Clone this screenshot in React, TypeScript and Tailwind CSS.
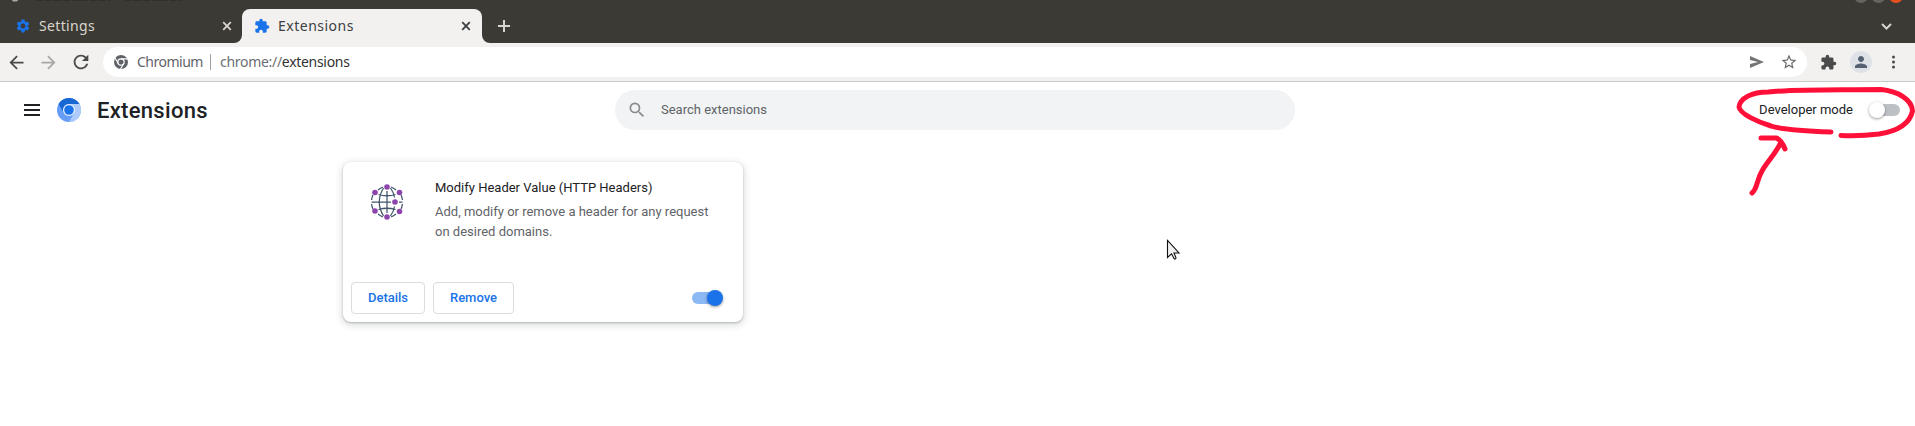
import React from "react";
import {
  MdSettings,
  MdExtension,
  MdArrowBack,
  MdArrowForward,
  MdRefresh,
  MdStarBorder,
  MdPerson,
  MdSearch,
} from "react-icons/md";

function CloseIcon() {
  return (
    <svg className="h-[10px] w-[10px]" viewBox="0 0 10 10" fill="none" stroke="currentColor" strokeWidth="1.8">
      <path d="M1.2 1.2l7.6 7.6M8.8 1.2l-7.6 7.6" />
    </svg>
  );
}

function ChromeMono() {
  return (
    <svg className="h-[14px] w-[14px]" viewBox="0 0 24 24">
      <circle cx="12" cy="12" r="12" fill="#5f6368" />
      <g stroke="#fff" strokeWidth="2" fill="none">
        <circle cx="12" cy="12" r="5.4" />
        <path d="M12 6.6H24M7.3 14.7L1.3 4.3M16.7 14.7L10.7 25" />
      </g>
    </svg>
  );
}

function ChromiumLogo() {
  return (
    <svg className="h-6 w-6" viewBox="0 0 24 24">
      <circle cx="12" cy="12" r="12" fill="#669df6" />
      <path d="M12 6h10.4A12 12 0 0 1 12 24l5.2-9z" fill="#aecbfa" />
      <path d="M1.6 6A12 12 0 0 1 22.4 6H12a6 6 0 0 0-5.2 9z" fill="#1967d2" />
      <circle cx="12" cy="12" r="6" fill="#e8f0fe" />
      <circle cx="12" cy="12" r="4.8" fill="#1a73e8" />
    </svg>
  );
}

function GlobeIcon() {
  return (
    <svg className="h-9 w-8" viewBox="0 0 32 36">
      <g fill="none" stroke="#41566b" strokeWidth="1.25">
        <path d="M.6 16a17 17 0 0 1 1.3-5M.6 20a16 16 0 0 0 1.3 5M31.4 16a17 17 0 0 0-1.3-5M31.400 20a16 16 0 0 1-1.300 5M7 6q2.500-2 5-3M25 6q-2.500-2-5-3M7 30q2.500 2 5 3M25 30q-2.500 2-5 3" />
        <path d="M16 7v22M.5 18H20M28 18h3.500" />
        <path d="M12.500 4Q4 18 12.500 32M19.500 4q3.500 5 4 9.500M19.500 32q3.500-5 4-9.500M7.500 10.500q8.500 2.500 17 0M7.500 25.500q8.500-2.500 17 0" />
      </g>
      <g fill="#8e44ad">
        <circle cx="16" cy="3" r="2.800" />
        <circle cx="16" cy="33" r="2.800" />
        <circle cx="4" cy="8.500" r="2.800" />
        <circle cx="28.500" cy="8.500" r="2.800" />
        <circle cx="4" cy="27" r="2.800" />
        <circle cx="28.500" cy="27.500" r="2.800" />
        <circle cx="24" cy="18" r="2.800" />
      </g>
    </svg>
  );
}

function Toggle({ on }: { on: boolean }) {
  return on ? (
    <div className="flex h-3 w-[30px] items-center justify-end rounded-full bg-[#8cb8f4]">
      <div className="-mr-px h-4 w-4 shrink-0 rounded-full bg-[#1a73e8] shadow-[0_1px_3px_rgba(0,0,0,0.4)]" />
    </div>
  ) : (
    <div className="flex h-3 w-[30px] items-center rounded-full bg-[#bdc1c6]">
      <div className="-ml-px h-4 w-4 shrink-0 rounded-full bg-white shadow-[0_1px_3px_rgba(0,0,0,0.4)]" />
    </div>
  );
}

function TabStrip() {
  return (
    <div className="relative flex h-[43px] items-end overflow-hidden bg-[#3c3a35] font-['Noto_Sans',sans-serif] text-[14px]">
      <svg className="absolute left-0 top-0 h-1 w-[1915px]" viewBox="0 0 1915 4">
        <path d="M12 0a3 1.500 0 0 0 6 0z" fill="#aaa69d" />
        <path d="M36 .5H110M125 .5H182" stroke="#302f2b" strokeWidth="1" strokeDasharray="7 2" />
        <circle cx="1861" cy="-4" r="7" fill="#66645f" />
        <circle cx="1878.500" cy="-4" r="7" fill="#66645f" />
        <circle cx="1896" cy="-4" r="7" fill="#e6501e" />
      </svg>
      <div className="flex h-[34px] w-[242px] items-center pl-[15px] pr-[10px] text-[#d9d5cc]">
        <MdSettings className="h-4 w-4 text-[#1a73e8]" />
        <span className="mb-px ml-[8px] flex-1 tracking-[0.35px]">Settings</span>
        <CloseIcon />
      </div>
      <div className="relative flex h-[34px] w-[240px] items-center rounded-t-lg bg-[#f2f1f0] pl-[12px] pr-[11px] text-[#3d4043]">
        <svg className="absolute -left-2 bottom-0 h-2 w-2" viewBox="0 0 8 8">
          <path d="M8 0v8H0a8 8 0 0 0 8-8z" fill="#f2f1f0" />
        </svg>
        <svg className="absolute -right-2 bottom-0 h-2 w-2" viewBox="0 0 8 8">
          <path d="M0 0v8h8a8 8 0 0 1-8-8z" fill="#f2f1f0" />
        </svg>
        <MdExtension className="h-4 w-4 text-[#1a73e8]" />
        <span className="mb-px ml-[8px] flex-1 tracking-[0.5px]">Extensions</span>
        <CloseIcon />
      </div>
      <div className="flex h-[34px] flex-1 items-center justify-between pl-4 pr-[23px] text-[#d9d5cc]">
        <svg className="h-3 w-3" viewBox="0 0 12 12" stroke="currentColor" strokeWidth="2">
          <path d="M6 0v12M0 6h12" />
        </svg>
        <svg className="h-[7px] w-[11px]" viewBox="0 0 11 7" fill="none" stroke="currentColor" strokeWidth="2">
          <path d="M1 1l4.500 4.500L10 1" />
        </svg>
      </div>
    </div>
  );
}

function Toolbar() {
  return (
    <div className="flex h-[39px] items-center border-b border-[#c9c9c8] bg-[#f2f1f0] pl-[6px] pr-5 font-['Noto_Sans',sans-serif] text-[14px]">
      <MdArrowBack className="h-[21px] w-[21px] text-[#4a4a4a]" />
      <MdArrowForward className="ml-[11px] h-[21px] w-[21px] text-[#a9a8a6]" />
      <MdRefresh className="ml-[11px] h-[22px] w-[22px] text-[#4a4a4a]" />
      <div className="ml-[11px] flex h-[30px] flex-1 items-center rounded-full bg-white pl-[11px] pr-[9px]">
        <ChromeMono />
        <span className="mb-[2px] ml-[9px] w-[66px] tracking-[-0.5px] text-[#5f6368]">Chromium</span>
        <div className="ml-[7px] h-4 w-px bg-[#a0a3a6]" />
        <span className="mb-[2px] ml-[9px] tracking-[-0.3px] text-[#6b6e72]">
          chrome://<span className="text-[#333]">extensions</span>
        </span>
        <svg className="ml-auto h-3 w-[14px]" viewBox="0 0 14 12">
          <path d="M0 0l14 6L0 12V8L8 6 0 4z" fill="#757575" />
          <path d="M1.500 2.300L6.200 4.300 1.500 3.300zM1.500 9.700l4.700-2-4.700 1z" fill="#757575" />
        </svg>
        <MdStarBorder className="ml-[16px] h-[18px] w-[18px] text-[#6b6b6b]" />
      </div>
      <MdExtension className="ml-[13px] h-[17px] w-[17px] text-[#4a4a4a]" />
      <div className="ml-[13px] flex h-[22px] w-[22px] items-center justify-center rounded-full bg-[#dee1e6]">
        <MdPerson className="h-[18px] w-[18px] text-[#556072]" />
      </div>
      <svg className="ml-[20px] h-[14px] w-[3px]" viewBox="0 0 3 14" fill="#4a4a4a">
        <circle cx="1.500" cy="2" r="1.500" />
        <circle cx="1.500" cy="7" r="1.500" />
        <circle cx="1.500" cy="12" r="1.500" />
      </svg>
    </div>
  );
}

function PageHeader() {
  return (
    <header className="flex h-14 items-center pl-6 pr-[15px]">
      <div className="flex w-[591px] items-center">
        <svg className="h-3 w-4" viewBox="0 0 16 12" fill="#202124">
          <path d="M0 0h16v2H0zM0 5h16v2H0zM0 10h16v2H0z" />
        </svg>
        <div className="ml-[17px]">
          <ChromiumLogo />
        </div>
        <h1 className="ml-4 mt-[2px] text-[22px] font-medium leading-7 tracking-[0.3px] text-[#202124]">Extensions</h1>
      </div>
      <div className="flex h-10 w-[680px] items-center rounded-full bg-[#f1f3f4] pl-3">
        <MdSearch className="h-5 w-5 text-[#8a8c8e]" />
        <span className="ml-[14px] text-[13px] text-[#5f6368]">Search extensions</span>
      </div>
      <span className="ml-auto mr-[17px] text-[13px] text-[#202124]">Developer mode</span>
      <Toggle on={false} />
    </header>
  );
}

function ExtensionCard() {
  return (
    <article className="ml-[343px] mt-6 flex h-40 w-[400px] flex-col rounded-lg bg-white shadow-[0_1px_2px_rgba(60,64,67,0.3),0_2px_6px_2px_rgba(60,64,67,0.15)]">
      <div className="flex h-[112px] pl-7 pt-4 text-[13px] leading-5">
        <div className="mt-[6px]">
          <GlobeIcon />
        </div>
        <div className="ml-8 w-[290px]">
          <div className="text-[#202124]">Modify Header Value (HTTP Headers)</div>
          <div className="mt-1 text-[#5f6368]">
            Add, modify or remove a header for any request
            <br />
            on desired domains.
          </div>
        </div>
      </div>
      <div className="flex h-12 items-center gap-2 pl-2 pr-5 text-[13px] font-medium text-[#1a73e8]">
        <button className="h-8 w-[74px] rounded border border-[#dadce0]">Details</button>
        <button className="h-8 w-[81px] rounded border border-[#dadce0]">Remove</button>
        <div className="ml-auto mr-px">
          <Toggle on />
        </div>
      </div>
    </article>
  );
}

export default function App() {
  return (
    <div className="relative h-[426px] w-[1915px] overflow-hidden bg-white font-[Roboto,sans-serif]">
      <TabStrip />
      <Toolbar />
      <PageHeader />
      <ExtensionCard />
      <svg className="absolute left-[1680px] top-[75px] h-[135px] w-[235px]" viewBox="0 75 235 135" fill="none" stroke="#ff1038" strokeWidth="5" strokeLinecap="round" strokeLinejoin="round">
        <path d="M151 132C125 131 103 130 91 126C78 122 60 114 59 107C60 98 72 92 88 92C115 89 150 90 201 89.500C217 91 232 99 232.500 111C230 123 218 131 199 134C183 136 172 136 161 135.500" />
        <path d="M81 138H96C100 139 103 144 105 149M101 142C97 152 87 162 82 171C76 181 78 188 72 193" />
      </svg>
      <svg className="absolute left-[1166px] top-[239px] h-[22px] w-[15px]" viewBox="0 0 15 22">
        <path d="M1.500 1.500v17l4-3.700L8 19.500c1 1 2 .500 2-.700L8 14h5z" fill="#f0f0f0" stroke="#111" strokeWidth="1.100" />
      </svg>
    </div>
  );
}
